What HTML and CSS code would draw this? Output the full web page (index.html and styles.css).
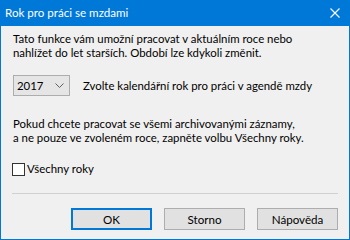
FILE: index.html
```html
<!doctype html>
<html lang="cs">
  <head>
    <meta charset="UTF-8" />
    <title>Rok pro práci se mzdami</title>
    <link rel="stylesheet" href="styles.css">
  </head>
  <body>
    <div class="window">
      <!-- Title bar -->
      <div class="titlebar">
        <span class="title">Rok pro práci se mzdami</span>
        <span class="close">
          <svg class="close-icon" width="10" height="10" viewBox="0 0 10 10">
            <path d="M0.5 0.5 L9.5 9.5 M9.5 0.5 L0.5 9.5" stroke="#ffffff" stroke-width="1.1" fill="none" />
          </svg>
        </span>
      </div>

      <!-- Dialog body -->
      <div class="client">
        <p class="text intro">
          Tato funkce vám umožní pracovat v aktuálním roce nebo<br />
          nahlížet do let starších. Období lze kdykoli změnit.
        </p>

        <div class="year-row">
          <div class="combo">
            <span>2017</span>
            <svg width="9" height="5" viewBox="0 0 9 5">
              <path d="M0.5 0.5 L4.5 4.5 L8.5 0.5" stroke="#606060" stroke-width="1" fill="none" />
            </svg>
          </div>
          <span class="text">Zvolte kalendářní rok pro práci v agendě mzdy</span>
        </div>

        <p class="text note">
          Pokud chcete pracovat se všemi archivovanými záznamy,<br />
          a ne pouze ve zvoleném roce, zapněte volbu Všechny roky.
        </p>

        <label class="check">
          <span class="box"></span>
          <span class="text">Všechny roky</span>
        </label>

        <div class="separator"></div>

        <div class="buttons">
          <button class="btn default">OK</button>
          <button class="btn">Storno</button>
          <button class="btn">Nápověda</button>
        </div>
      </div>
    </div>
  </body>
</html>
```

FILE: styles.css
```css
/* Windows 10 style dialog */
:root {
  --accent: #0078d7;
  --face: #f0f0f0;
  --button: #e1e1e1;
  --button-border: #adadad;
  --text: #000000;
}

body {
  margin: 0;
  font-family: "Lato", "Noto Sans", sans-serif;
  font-size: 11.4px;
  color: var(--text);
}

.window {
  width: 350px;
  height: 240px;
  box-sizing: border-box;
  border: 1px solid var(--accent);
  border-top: none;
  background: var(--face);
  display: flex;
  flex-direction: column;
  overflow: hidden;
  white-space: nowrap;
}

/* Title bar */
.titlebar {
  height: 26px;
  flex: none;
  margin: 0 -1px;
  background: var(--accent);
  display: flex;
  align-items: center;
  justify-content: space-between;
  color: #ffffff;
  font-size: 11.6px;
}

.title {
  padding-left: 5px;
  line-height: 14px;
}

.close {
  width: 30px;
  height: 26px;
  display: flex;
  align-items: center;
  justify-content: center;
}

.close-icon {
  display: block;
}

/* Body */
.client {
  padding: 6px 11px 0 11px;
}

.text {
  line-height: 14px;
}

p {
  margin: 0;
}

.intro {
  padding-left: 1px;
}

.year-row {
  margin-top: 15px;
  display: flex;
  align-items: center;
  gap: 13px;
  padding-left: 1px;
}

.combo {
  width: 57px;
  height: 21px;
  box-sizing: border-box;
  border: 1px solid var(--button-border);
  background: #e5e5e5;
  display: flex;
  align-items: center;
  justify-content: space-between;
  padding: 0 5px 0 3px;
}

.note {
  margin-top: 21px;
  padding-left: 1px;
}

.check {
  margin-top: 17px;
  display: flex;
  align-items: center;
  gap: 2px;
}

.box {
  width: 13px;
  height: 13px;
  box-sizing: border-box;
  border: 1px solid #333333;
  background: #ffffff;
}

.separator {
  margin-top: 17px;
  height: 1px;
  background: #d0d0d0;
}

/* Buttons */
.buttons {
  margin-top: 14px;
  display: flex;
  justify-content: flex-end;
  gap: 12px;
}

.btn {
  width: 81px;
  height: 22px;
  box-sizing: border-box;
  border: 1px solid var(--button-border);
  background: var(--button);
  font-family: "Lato", "Noto Sans", sans-serif;
  font-size: 11.6px;
  color: var(--text);
  padding: 0;
}

.btn.default {
  border: 2px solid var(--accent);
}
```
